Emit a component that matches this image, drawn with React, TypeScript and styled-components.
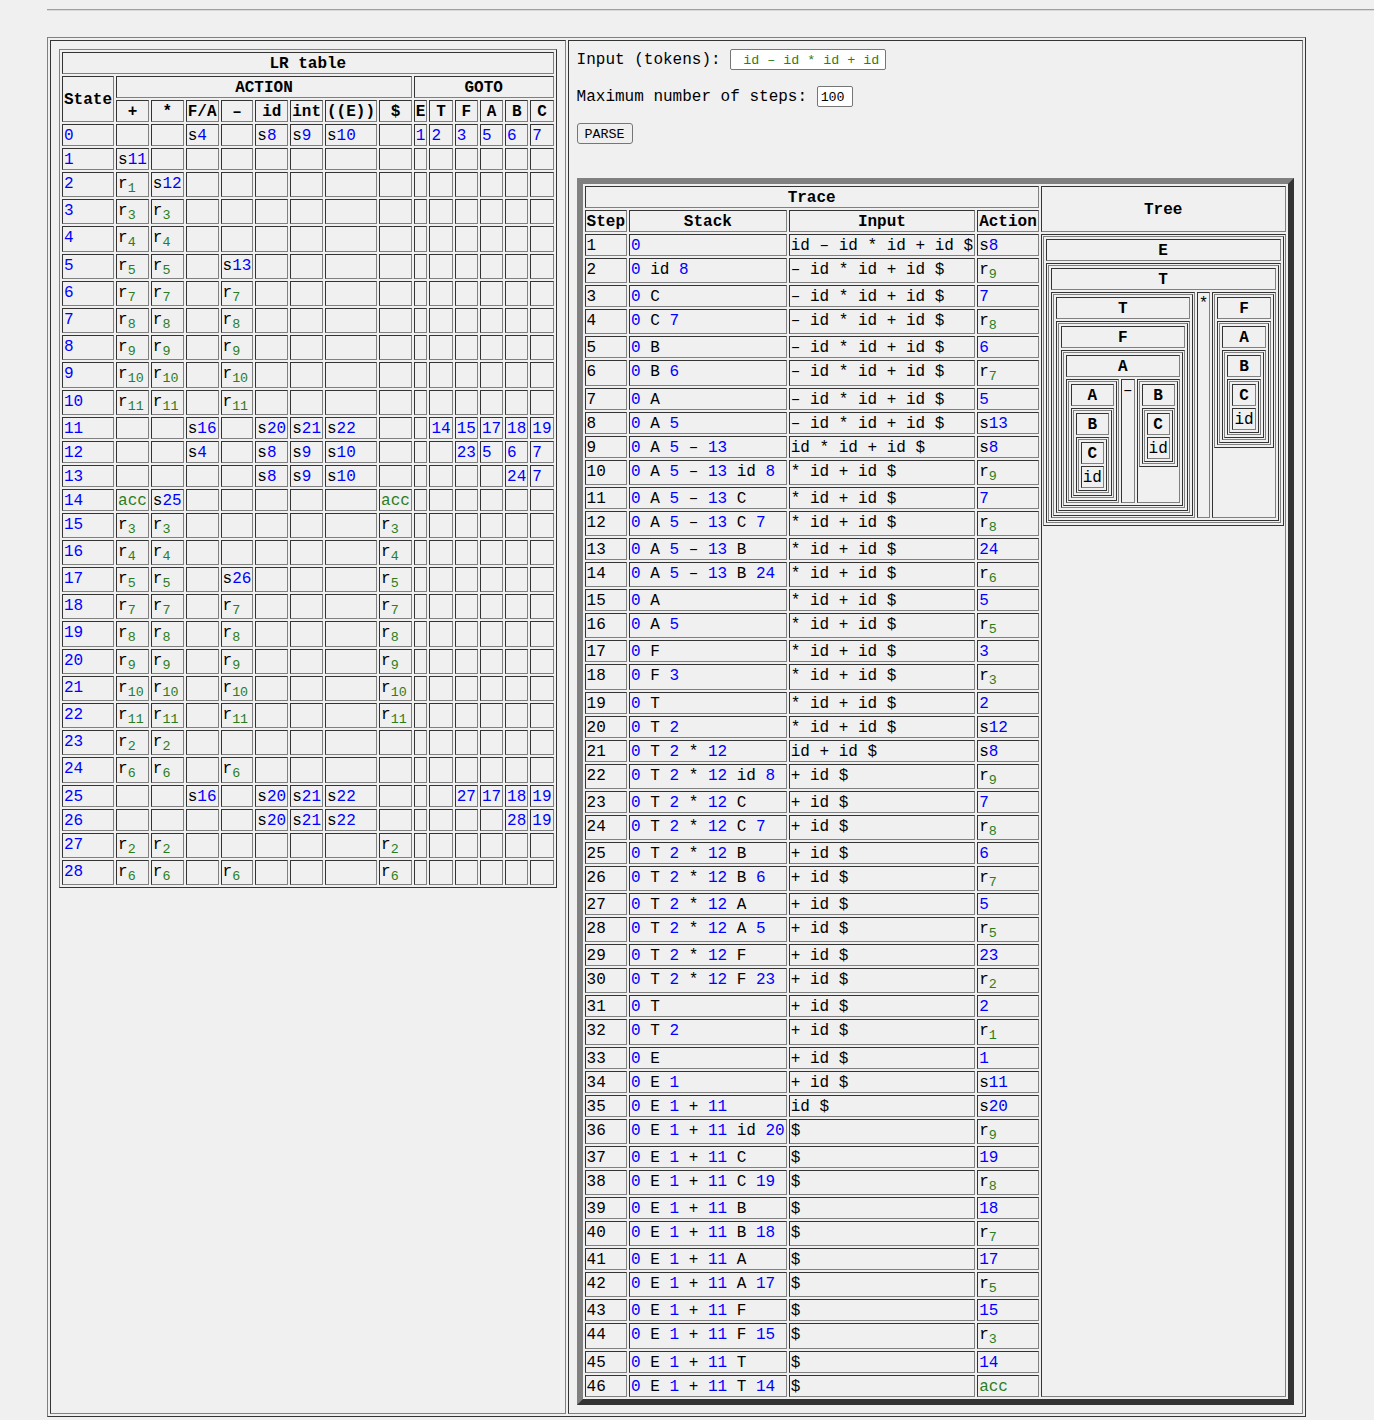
import React from "react";
import styled, { createGlobalStyle } from "styled-components";

const GlobalStyle = createGlobalStyle`
  html, body {
    margin: 0;
    background-color: #f0f0f0;
    color: #000;
    font-family: "Liberation Mono", "Courier New", monospace;
    font-size: 16px;
    line-height: 18px;
  }
`;

const Page = styled.div`
  padding-left: 47px;
`;

const Rule = styled.hr`
  height: 0;
  margin: 9px 0 26px;
  border: 0;
  border-top: 1px solid #a0a0a0;
  border-bottom: 1px solid #d8d8d8;
`;

const Table = styled.table<{ $width?: string }>`
  border-collapse: separate;
  border-spacing: 2px;
  border: 1px solid;
  border-color: #808080 #333 #333 #808080;
  ${(p) => (p.$width ? `width: ${p.$width};` : "")}
`;

const cellBorder = `
  border: 1px solid;
  border-color: #333 #808080 #808080 #333;
`;

const Head = styled.th`
  ${cellBorder}
  padding: 2px 1px 0;
  font-weight: bold;
  text-align: center;
  vertical-align: middle;
`;

const Cell = styled.td`
  ${cellBorder}
  padding: 2px 1px 0;
  vertical-align: top;
  white-space: pre;
`;

const NestCell = styled(Cell)`
  padding: 1px;
`;

const Panel = styled.td`
  ${cellBorder}
  padding: 8px;
  vertical-align: top;
`;

const Row = styled.div`
  display: flex;
  align-items: center;
  gap: 9.6px;
  height: 21px;
  margin-bottom: 16px;
`;

const TokenInput = styled.input`
  box-sizing: border-box;
  width: 156px;
  height: 21px;
  padding: 1px 0 0 6px;
  border: 1px solid #767676;
  border-radius: 2px;
  background: #fff;
  color: #2a7d1c;
  font-family: inherit;
  font-size: 13.33px;
  text-align: center;
`;

const StepsInput = styled(TokenInput)`
  width: 36px;
  padding: 1px 3px 0;
  color: #000;
  text-align: left;
`;

const ParseButton = styled.button`
  display: block;
  box-sizing: border-box;
  width: 56px;
  height: 21px;
  padding: 1px 0 0;
  margin-bottom: 34px;
  border: 1px solid #767676;
  border-radius: 3px;
  background: #efefef;
  color: #000;
  font-family: inherit;
  font-size: 13.33px;
`;

const TraceTable = styled(Table)`
  border-width: 6px;
  border-color: #808080 #333 #333 #808080;
`;

const Num = styled.span`
  color: #00f;
`;

const Green = styled.span`
  color: #2a7d1c;
`;

const Sub = styled.sub`
  color: #2a7d1c;
  font-size: 13.33px;
  line-height: 14px;
  vertical-align: sub;
`;

// s4 -> shift, r3 -> reduce, acc, plain number -> goto
const Entry = ({ value }: { value: string }) => {
  if (value === "acc") return <Green>acc</Green>;
  if (value[0] === "s")
    return (
      <>
        s<Num>{value.slice(1)}</Num>
      </>
    );
  if (value[0] === "r")
    return (
      <>
        r<Sub>{value.slice(1)}</Sub>
      </>
    );
  return <Num>{value}</Num>;
};

const actionCols = ["+", "*", "F/A", "–", "id", "int", "((E))", "$"];
const gotoCols = ["E", "T", "F", "A", "B", "C"];

const e = "";
const lrRows: string[][] = [
  [e, e, "s4", e, "s8", "s9", "s10", e, "1", "2", "3", "5", "6", "7"],
  ["s11", e, e, e, e, e, e, e, e, e, e, e, e, e],
  ["r1", "s12", e, e, e, e, e, e, e, e, e, e, e, e],
  ["r3", "r3", e, e, e, e, e, e, e, e, e, e, e, e],
  ["r4", "r4", e, e, e, e, e, e, e, e, e, e, e, e],
  ["r5", "r5", e, "s13", e, e, e, e, e, e, e, e, e, e],
  ["r7", "r7", e, "r7", e, e, e, e, e, e, e, e, e, e],
  ["r8", "r8", e, "r8", e, e, e, e, e, e, e, e, e, e],
  ["r9", "r9", e, "r9", e, e, e, e, e, e, e, e, e, e],
  ["r10", "r10", e, "r10", e, e, e, e, e, e, e, e, e, e],
  ["r11", "r11", e, "r11", e, e, e, e, e, e, e, e, e, e],
  [e, e, "s16", e, "s20", "s21", "s22", e, e, "14", "15", "17", "18", "19"],
  [e, e, "s4", e, "s8", "s9", "s10", e, e, e, "23", "5", "6", "7"],
  [e, e, e, e, "s8", "s9", "s10", e, e, e, e, e, "24", "7"],
  ["acc", "s25", e, e, e, e, e, "acc", e, e, e, e, e, e],
  ["r3", "r3", e, e, e, e, e, "r3", e, e, e, e, e, e],
  ["r4", "r4", e, e, e, e, e, "r4", e, e, e, e, e, e],
  ["r5", "r5", e, "s26", e, e, e, "r5", e, e, e, e, e, e],
  ["r7", "r7", e, "r7", e, e, e, "r7", e, e, e, e, e, e],
  ["r8", "r8", e, "r8", e, e, e, "r8", e, e, e, e, e, e],
  ["r9", "r9", e, "r9", e, e, e, "r9", e, e, e, e, e, e],
  ["r10", "r10", e, "r10", e, e, e, "r10", e, e, e, e, e, e],
  ["r11", "r11", e, "r11", e, e, e, "r11", e, e, e, e, e, e],
  ["r2", "r2", e, e, e, e, e, e, e, e, e, e, e, e],
  ["r6", "r6", e, "r6", e, e, e, e, e, e, e, e, e, e],
  [e, e, "s16", e, "s20", "s21", "s22", e, e, e, "27", "17", "18", "19"],
  [e, e, e, e, "s20", "s21", "s22", e, e, e, e, e, "28", "19"],
  ["r2", "r2", e, e, e, e, e, "r2", e, e, e, e, e, e],
  ["r6", "r6", e, "r6", e, e, e, "r6", e, e, e, e, e, e],
];

const LrTable = () => (
  <Table $width="497.6px">
    <tbody>
      <tr>
        <Head colSpan={15}>LR table</Head>
      </tr>
      <tr>
        <Head rowSpan={2}>State</Head>
        <Head colSpan={8}>ACTION</Head>
        <Head colSpan={6}>GOTO</Head>
      </tr>
      <tr>
        {[...actionCols, ...gotoCols].map((c, i) => (
          <Head key={i}>{c}</Head>
        ))}
      </tr>
      {lrRows.map((row, state) => (
        <tr key={state}>
          <Cell>
            <Num>{state}</Num>
          </Cell>
          {row.map((v, i) => (
            <Cell key={i}>{v && <Entry value={v} />}</Cell>
          ))}
        </tr>
      ))}
    </tbody>
  </Table>
);

const S1 = "id – id * id + id $";
const S2 = "– id * id + id $";
const S3 = "id * id + id $";
const S4 = "* id + id $";
const S5 = "id + id $";
const S6 = "+ id $";
const S7 = "id $";
const S8 = "$";

const trace: [string, string, string][] = [
  ["0", S1, "s8"],
  ["0 id 8", S2, "r9"],
  ["0 C", S2, "7"],
  ["0 C 7", S2, "r8"],
  ["0 B", S2, "6"],
  ["0 B 6", S2, "r7"],
  ["0 A", S2, "5"],
  ["0 A 5", S2, "s13"],
  ["0 A 5 – 13", S3, "s8"],
  ["0 A 5 – 13 id 8", S4, "r9"],
  ["0 A 5 – 13 C", S4, "7"],
  ["0 A 5 – 13 C 7", S4, "r8"],
  ["0 A 5 – 13 B", S4, "24"],
  ["0 A 5 – 13 B 24", S4, "r6"],
  ["0 A", S4, "5"],
  ["0 A 5", S4, "r5"],
  ["0 F", S4, "3"],
  ["0 F 3", S4, "r3"],
  ["0 T", S4, "2"],
  ["0 T 2", S4, "s12"],
  ["0 T 2 * 12", S5, "s8"],
  ["0 T 2 * 12 id 8", S6, "r9"],
  ["0 T 2 * 12 C", S6, "7"],
  ["0 T 2 * 12 C 7", S6, "r8"],
  ["0 T 2 * 12 B", S6, "6"],
  ["0 T 2 * 12 B 6", S6, "r7"],
  ["0 T 2 * 12 A", S6, "5"],
  ["0 T 2 * 12 A 5", S6, "r5"],
  ["0 T 2 * 12 F", S6, "23"],
  ["0 T 2 * 12 F 23", S6, "r2"],
  ["0 T", S6, "2"],
  ["0 T 2", S6, "r1"],
  ["0 E", S6, "1"],
  ["0 E 1", S6, "s11"],
  ["0 E 1 + 11", S7, "s20"],
  ["0 E 1 + 11 id 20", S8, "r9"],
  ["0 E 1 + 11 C", S8, "19"],
  ["0 E 1 + 11 C 19", S8, "r8"],
  ["0 E 1 + 11 B", S8, "18"],
  ["0 E 1 + 11 B 18", S8, "r7"],
  ["0 E 1 + 11 A", S8, "17"],
  ["0 E 1 + 11 A 17", S8, "r5"],
  ["0 E 1 + 11 F", S8, "15"],
  ["0 E 1 + 11 F 15", S8, "r3"],
  ["0 E 1 + 11 T", S8, "14"],
  ["0 E 1 + 11 T 14", S8, "acc"],
];

const Stack = ({ value }: { value: string }) => (
  <>
    {value.split(" ").map((tok, i) => (
      <React.Fragment key={i}>
        {i > 0 && " "}
        {/^\d+$/.test(tok) ? <Num>{tok}</Num> : tok}
      </React.Fragment>
    ))}
  </>
);

type TreeNode = { label: string; kids: (TreeNode | string)[] };

const chainC: TreeNode = { label: "C", kids: ["id"] };
const chainB: TreeNode = { label: "B", kids: [chainC] };
const chainA: TreeNode = { label: "A", kids: [chainB] };

const parseTree: TreeNode = {
  label: "E",
  kids: [
    {
      label: "T",
      kids: [
        {
          label: "T",
          kids: [
            {
              label: "F",
              kids: [{ label: "A", kids: [chainA, "–", chainB] }],
            },
          ],
        },
        "*",
        { label: "F", kids: [chainA] },
      ],
    },
  ],
};

const Tree = ({ node }: { node: TreeNode }) => (
  <Table>
    <tbody>
      <tr>
        <Head colSpan={node.kids.length}>{node.label}</Head>
      </tr>
      <tr>
        {node.kids.map((k, i) =>
          typeof k === "string" ? (
            <Cell key={i}>{k}</Cell>
          ) : (
            <NestCell key={i}>
              <Tree node={k} />
            </NestCell>
          ),
        )}
      </tr>
    </tbody>
  </Table>
);

const TraceBlock = () => (
  <TraceTable>
    <tbody>
      <tr>
        <Head colSpan={4}>Trace</Head>
        <Head rowSpan={2}>Tree</Head>
      </tr>
      <tr>
        <Head>Step</Head>
        <Head>Stack</Head>
        <Head>Input</Head>
        <Head>Action</Head>
      </tr>
      {trace.map(([stack, input, action], i) => (
        <tr key={i}>
          <Cell>{i + 1}</Cell>
          <Cell>
            <Stack value={stack} />
          </Cell>
          <Cell>{input}</Cell>
          <Cell>
            <Entry value={action} />
          </Cell>
          {i === 0 && (
            <NestCell rowSpan={trace.length}>
              <Tree node={parseTree} />
            </NestCell>
          )}
        </tr>
      ))}
    </tbody>
  </TraceTable>
);

export default function App() {
  return (
    <Page>
      <GlobalStyle />
      <Rule />
      <Table>
        <tbody>
          <tr>
            <Panel>
              <LrTable />
            </Panel>
            <Panel>
              <Row>
                Input (tokens):
                <TokenInput readOnly value="id – id * id + id" />
              </Row>
              <Row>
                Maximum number of steps:
                <StepsInput readOnly value="100" />
              </Row>
              <ParseButton>PARSE</ParseButton>
              <TraceBlock />
            </Panel>
          </tr>
        </tbody>
      </Table>
    </Page>
  );
}
